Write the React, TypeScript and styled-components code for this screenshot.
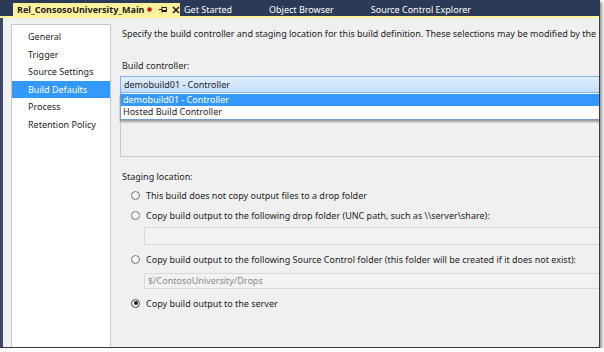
import React from 'react';
import styled, { createGlobalStyle } from 'styled-components';

const GlobalStyle = createGlobalStyle`
    html, body {
        margin: 0;
        padding: 0;
        background: #ffffff;
    }
    body {
        font-family: "Noto Sans", "Open Sans", sans-serif;
        font-size: 9px;
        color: #1e1e1e;
    }
`;

const Window = styled.div`
    width: 599px;
    height: 347px;
    display: flex;
    flex-direction: column;
    background: #f0f0f0;
    border-right: 1px solid #3c3c3c;
    border-bottom: 1px solid #3c3c3c;
    box-shadow: 2px 2px 3px rgba(0, 0, 0, 0.45);
    overflow: hidden;
`;

const TabStrip = styled.div`
    height: 16px;
    display: flex;
    align-items: flex-end;
    padding-left: 13px;
    background: #2b3a57;
    border-bottom: 2px solid #fff29d;
    flex-shrink: 0;
`;

const ActiveTab = styled.div`
    height: 13px;
    width: 163px;
    display: flex;
    align-items: center;
    padding-left: 4px;
    background: #fff29d;
    color: #1b1b1b;
    font-weight: 700;
    white-space: nowrap;
`;

const TabTitle = styled.span`
    margin-right: 3px;
`;

const Tab = styled.div`
    height: 13px;
    display: flex;
    align-items: center;
    padding: 0 33px 0 4px;
    color: #ffffff;
    white-space: nowrap;
`;

const TabIcon = styled.svg<{ $gap?: number }>`
    display: block;
    flex-shrink: 0;
    margin-left: ${p => p.$gap ?? 0}px;
`;

const Body = styled.div`
    flex: 1;
    display: flex;
    border-left: 3px solid #3b4868;
    min-height: 0;
`;

const Nav = styled.ul`
    list-style: none;
    margin: 6px 0 0 8px;
    padding: 3px 0 0;
    width: 98px;
    background: #ffffff;
    border: 1px solid #c6c6c6;
    border-bottom: none;
    flex-shrink: 0;
`;

const NavItem = styled.li<{ $active?: boolean }>`
    height: 17.6px;
    line-height: 17.6px;
    padding-left: 16px;
    background: ${p => (p.$active ? '#3399ff' : 'transparent')};
    color: ${p => (p.$active ? '#ffffff' : '#1e1e1e')};
    white-space: nowrap;
`;

const Main = styled.div`
    flex: 1;
    min-width: 0;
    padding: 9px 0 0 9px;
    overflow: hidden;
    white-space: nowrap;
`;

const Text = styled.div<{ $top?: number }>`
    height: 14px;
    line-height: 14px;
    margin: ${p => p.$top ?? 0}px 0 0 2px;
`;

const Intro = styled(Text)`
    letter-spacing: -0.02px;
`;

const ControllerBox = styled.div`
    position: relative;
    width: 500px;
    margin-top: 3px;
`;

const Combo = styled.div`
    height: 15px;
    line-height: 15px;
    padding-left: 3px;
    border: 1px solid #7eb4ea;
    background: linear-gradient(#e0eefd, #c6defa);
`;

const DescBox = styled.div`
    height: 63px;
    border: 1px solid #c9c9c9;
    border-top: none;
`;

const DropList = styled.ul`
    position: absolute;
    top: 17px;
    left: 0;
    right: 0;
    margin: 0;
    padding: 1px 0 0;
    list-style: none;
    background: #ffffff;
    border: 1px solid #7a9cc4;
    border-top: none;
    box-shadow: 0 2px 2px rgba(0, 0, 0, 0.35);
`;

const DropItem = styled.li<{ $active?: boolean }>`
    height: 12.4px;
    line-height: 12.4px;
    padding-left: 2px;
    background: ${p => (p.$active ? '#3399ff' : '#ffffff')};
    color: ${p => (p.$active ? '#ffffff' : '#1e1e1e')};
`;

const RadioRow = styled.label<{ $top?: number }>`
    display: flex;
    align-items: center;
    gap: 6px;
    height: 20px;
    margin-top: ${p => p.$top ?? 0}px;
    padding-left: 11px;
`;

const RadioCircle = styled.span<{ $checked?: boolean }>`
    width: 9px;
    height: 9px;
    box-sizing: border-box;
    border-radius: 50%;
    border: 1px solid ${p => (p.$checked ? '#4a4a4a' : '#7a7a7a')};
    background: radial-gradient(circle at 50% 40%, #ffffff, #e6e6e6);
    display: flex;
    align-items: center;
    justify-content: center;
    flex-shrink: 0;

    &::after {
        content: '';
        display: ${p => (p.$checked ? 'block' : 'none')};
        width: 4px;
        height: 4px;
        border-radius: 50%;
        background: #1a1a1a;
    }
`;

const PathInput = styled.div<{ $h: number; $top: number }>`
    width: 470px;
    height: ${p => p.$h - 2}px;
    line-height: ${p => p.$h - 2}px;
    margin: ${p => p.$top}px 0 0 24px;
    padding-left: 3px;
    border: 1px solid #d9d9d9;
    background: #f2f2f2;
    color: #8c8c8c;
`;

const navItems = ['General', 'Trigger', 'Source Settings', 'Build Defaults', 'Process', 'Retention Policy'];

function Pin() {
    return (
        <TabIcon width="9" height="9" viewBox="0 0 9 9" $gap={7}>
            <path d="M0 4.5H3M3 1.5V7.5M3 2.5H7.5V6.5H3M3 5.5H7.5" stroke="#1b1b1b" strokeWidth="1" fill="none" />
        </TabIcon>
    );
}

function Close() {
    return (
        <TabIcon width="8" height="8" viewBox="0 0 8 8" $gap={4}>
            <path d="M1 1L7 7M7 1L1 7" stroke="#1b1b1b" strokeWidth="1.6" />
        </TabIcon>
    );
}

export default function App() {
    return (
        <>
            <GlobalStyle />
            <Window>
                <TabStrip>
                    <ActiveTab>
                        <TabTitle>Rel_ConsosoUniversity_Main</TabTitle>
                        <TabIcon width="5" height="5" viewBox="0 0 5 5">
                            <circle cx="2.5" cy="2.5" r="2.2" fill="#d01010" />
                        </TabIcon>
                        <Pin />
                        <Close />
                    </ActiveTab>
                    <Tab>Get Started</Tab>
                    <Tab>Object Browser</Tab>
                    <Tab>Source Control Explorer</Tab>
                </TabStrip>
                <Body>
                    <Nav>
                        {navItems.map(item => (
                            <NavItem key={item} $active={item === 'Build Defaults'}>
                                {item}
                            </NavItem>
                        ))}
                    </Nav>
                    <Main>
                        <Intro>
                            Specify the build controller and staging location for this build definition. These selections may be modified by the
                        </Intro>
                        <Text $top={18}>Build controller:</Text>
                        <ControllerBox>
                            <Combo>demobuild01 - Controller</Combo>
                            <DescBox />
                            <DropList>
                                <DropItem $active>demobuild01 - Controller</DropItem>
                                <DropItem>Hosted Build Controller</DropItem>
                            </DropList>
                        </ControllerBox>
                        <Text $top={13}>Staging location:</Text>
                        <RadioRow $top={1}>
                            <RadioCircle />
                            This build does not copy output files to a drop folder
                        </RadioRow>
                        <RadioRow>
                            <RadioCircle />
                            Copy build output to the following drop folder (UNC path, such as \\server\share):
                        </RadioRow>
                        <PathInput $h={18} $top={2} />
                        <RadioRow $top={4}>
                            <RadioCircle />
                            Copy build output to the following Source Control folder (this folder will be created if it does not exist):
                        </RadioRow>
                        <PathInput $h={16} $top={4}>$/ContosoUniversity/Drops</PathInput>
                        <RadioRow $top={4}>
                            <RadioCircle $checked />
                            Copy build output to the server
                        </RadioRow>
                    </Main>
                </Body>
            </Window>
        </>
    );
}
